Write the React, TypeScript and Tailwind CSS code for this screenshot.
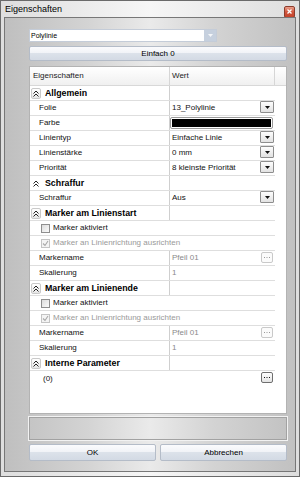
type Row =
  | { t: "cat"; label: string; boxed?: boolean }
  | { t: "prop"; name: string; value?: string; kind?: "select" | "color" | "ellipsis"; muted?: boolean }
  | { t: "check"; label: string; checked?: boolean; disabled?: boolean }
  | { t: "param"; label: string };

const MARKER_ROWS: Row[] = [
  { t: "check", label: "Marker aktiviert" },
  { t: "check", label: "Marker an Linienrichtung ausrichten", checked: true, disabled: true },
  { t: "prop", name: "Markername", value: "Pfeil 01", kind: "ellipsis", muted: true },
  { t: "prop", name: "Skalierung", value: "1", muted: true },
];

const ROWS: Row[] = [
  { t: "cat", label: "Allgemein", boxed: true },
  { t: "prop", name: "Folie", value: "13_Polylinie", kind: "select" },
  { t: "prop", name: "Farbe", kind: "color" },
  { t: "prop", name: "Linientyp", value: "Einfache Linie", kind: "select" },
  { t: "prop", name: "Linienstärke", value: "0 mm", kind: "select" },
  { t: "prop", name: "Priorität", value: "8 kleinste Priorität", kind: "select" },
  { t: "cat", label: "Schraffur" },
  { t: "prop", name: "Schraffur", value: "Aus", kind: "select" },
  { t: "cat", label: "Marker am Linienstart", boxed: true },
  ...MARKER_ROWS,
  { t: "cat", label: "Marker am Linienende", boxed: true },
  ...MARKER_ROWS,
  { t: "cat", label: "Interne Parameter", boxed: true },
  { t: "param", label: "(0)" },
];

const ROW = "flex h-[15px] w-[245px] shrink-0 border-b border-[#dedede]";
const NAME_COL = "flex w-[140px] shrink-0 items-center border-r border-[#cfcfcf]";

function Chevron({ boxed }: { boxed?: boolean }) {
  return (
    <span
      className={
        boxed
          ? "flex h-[11px] w-[10px] items-center justify-center rounded-[2px] border border-[#c9c9c9] bg-[linear-gradient(#ffffff,#e6e6e6)]"
          : "flex h-[11px] w-[10px] items-center justify-center"
      }
    >
      <svg width="6" height="7" viewBox="0 0 6 7">
        <path d="M0.5 3.5 L3 1 L5.5 3.5 M0.5 6.5 L3 4 L5.5 6.5" stroke="#222" strokeWidth="1" fill="none" />
      </svg>
    </span>
  );
}

function SelectArrow() {
  return (
    <span className="mr-[1px] flex h-[12px] w-[14px] shrink-0 items-center justify-center self-start rounded-[1px] border border-[#8d8d8d] bg-[linear-gradient(#fdfdfd,#e2e2e2)]">
      <svg width="5" height="3" viewBox="0 0 5 3">
        <path d="M0 0 H5 L2.5 3 Z" fill="#111" />
      </svg>
    </span>
  );
}

function Ellipsis({ disabled }: { disabled?: boolean }) {
  const fill = disabled ? "#9a9a9a" : "#111";
  return (
    <span
      className={
        disabled
          ? "mr-[2px] mt-[1px] flex h-[11px] w-[12px] shrink-0 items-center justify-center self-start rounded-[2px] border border-[#c9c9c9] bg-[#fbfbfb]"
          : "mr-[2px] mt-[1px] flex h-[11px] w-[12px] shrink-0 items-center justify-center self-start rounded-[2px] border border-[#6f6f6f] bg-[linear-gradient(#fdfdfd,#e4e4e4)]"
      }
    >
      <svg width="6" height="1" viewBox="0 0 6 1">
        <rect x="0" y="0" width="1" height="1" fill={fill} />
        <rect x="2.5" y="0" width="1" height="1" fill={fill} />
        <rect x="5" y="0" width="1" height="1" fill={fill} />
      </svg>
    </span>
  );
}

function Checkbox({ checked, disabled }: { checked?: boolean; disabled?: boolean }) {
  return (
    <span
      className={
        disabled
          ? "flex h-[9px] w-[9px] shrink-0 items-center justify-center border border-[#c4c4c4] bg-[#f4f4f4]"
          : "flex h-[9px] w-[9px] shrink-0 items-center justify-center border border-[#8f8f8f] bg-[linear-gradient(135deg,#dcdcdc,#fbfbfb)]"
      }
    >
      {checked && (
        <svg width="7" height="7" viewBox="0 0 7 7">
          <path d="M1 3.5 L3 5.5 L6 1" stroke="#a8a8a8" strokeWidth="1.1" fill="none" />
        </svg>
      )}
    </span>
  );
}

function GridRow({ row }: { row: Row }) {
  switch (row.t) {
    case "cat":
      return (
        <div className={ROW}>
          <div className={NAME_COL + " pl-[1px]"}>
            <Chevron boxed={row.boxed} />
            <span className="ml-[4px] text-[8.8px] font-bold text-black">{row.label}</span>
          </div>
          <div className="flex-1" />
        </div>
      );
    case "prop":
      return (
        <div className={ROW}>
          <div className={NAME_COL + " pl-[9px] text-[#111]"}>{row.name}</div>
          <div className="flex min-w-0 flex-1 items-center">
            {row.kind === "color" ? (
              <span className="mt-[1px] h-[12px] w-[103px] self-start rounded-[2px] border border-[#9a9a9a] bg-white p-[1px]">
                <span className="block h-full w-full bg-black" />
              </span>
            ) : (
              <>
                <span className={row.muted ? "flex-1 pl-[2px] text-[#8a8a8a]" : "flex-1 pl-[2px] text-[#111]"}>
                  {row.value}
                </span>
                {row.kind === "select" && <SelectArrow />}
                {row.kind === "ellipsis" && <Ellipsis disabled={row.muted} />}
              </>
            )}
          </div>
        </div>
      );
    case "check":
      return (
        <div className={ROW + " items-center pl-[11px]"}>
          <Checkbox checked={row.checked} disabled={row.disabled} />
          <span className={row.disabled ? "ml-[3px] text-[#999]" : "ml-[3px] text-[#111]"}>{row.label}</span>
        </div>
      );
    case "param":
      return (
        <div className="flex h-[15px] w-[245px] shrink-0 items-center pl-[13px]">
          <span className="flex-1 text-[#111]">{row.label}</span>
          <Ellipsis />
        </div>
      );
  }
}

function AeroButton({ label, className }: { label: string; className?: string }) {
  return (
    <div
      className={
        "flex items-center justify-center rounded-[2px] border border-[#b4bcc8] bg-[linear-gradient(#fbfbfd_0%,#f1f3f7_45%,#dce2ea_50%,#d3dae4_100%)] text-[8px] text-black " +
        (className ?? "")
      }
    >
      {label}
    </div>
  );
}

export default function App() {
  return (
    <div className="flex h-[477px] w-[300px] flex-col border border-[#6a6a6a] bg-[linear-gradient(90deg,#dedede,#f6f6f6_50%,#dedede)] px-[3px] pb-[4px] font-['Liberation_Sans',Arial,sans-serif] text-[8px] leading-none">
      {/* title bar */}
      <div className="flex h-[16px] shrink-0 items-center justify-between pl-[1px]">
        <span className="text-[9px] text-black">Eigenschaften</span>
        <span className="mr-[1px] mt-[5px] flex h-[12px] w-[11px] items-center justify-center rounded-[2px] border border-[#8c3b2c] bg-[linear-gradient(#eba08c,#d0553c_50%,#c4432b)]">
          <svg width="5" height="5" viewBox="0 0 5 5">
            <path d="M0.5 0.5 L4.5 4.5 M4.5 0.5 L0.5 4.5" stroke="#fff" strokeWidth="1.3" />
          </svg>
        </span>
      </div>

      {/* client area */}
      <div className="flex flex-1 flex-col border border-[#777] bg-[linear-gradient(90deg,#bfbfbf_0%,#d3d3d3_28%,#eaeaea_50%,#d3d3d3_72%,#c1c1c1_100%)] pl-[24px] pr-[7px] pt-[11px]">
        <div className="flex h-[13px] w-[188px] items-center border border-[#c4ccd8] bg-white">
          <span className="flex-1 pl-[1px] text-[7px] text-black">Polylinie</span>
          <span className="flex h-full w-[12px] items-center justify-center bg-[#c6d0de]">
            <svg width="5" height="3" viewBox="0 0 5 3">
              <path d="M0 0 H5 L2.5 3 Z" fill="#f4f6f9" />
            </svg>
          </span>
        </div>

        <AeroButton label="Einfach 0" className="mt-[4px] h-[15px] w-[258px] text-[7.6px]" />

        {/* property grid */}
        <div className="mt-[5px] flex h-[348px] w-[258px] flex-col border border-[#b3b3b3] bg-white">
          <div className="flex h-[19px] shrink-0 border-b border-[#d8d8d8] bg-[linear-gradient(#ffffff,#f0f0f0)] text-[#222]">
            <div className="flex w-[140px] items-center border-r border-[#d6d6d6] pl-[3px]">Eigenschaften</div>
            <div className="flex w-[105px] items-center border-r border-[#d6d6d6] pl-[2px]">Wert</div>
          </div>
          {ROWS.map((r, i) => (
            <GridRow key={i} row={r} />
          ))}
        </div>

        {/* description panel */}
        <div className="mt-[3px] h-[23px] w-[258px] border border-[#a2a2a2] shadow-[0_0_0_1px_#f2f2f2]" />

        <div className="mt-[4px] grid w-[258px] grid-cols-2 gap-[4px]">
          <AeroButton label="OK" className="h-[17px]" />
          <AeroButton label="Abbrechen" className="h-[17px]" />
        </div>
      </div>
    </div>
  );
}
